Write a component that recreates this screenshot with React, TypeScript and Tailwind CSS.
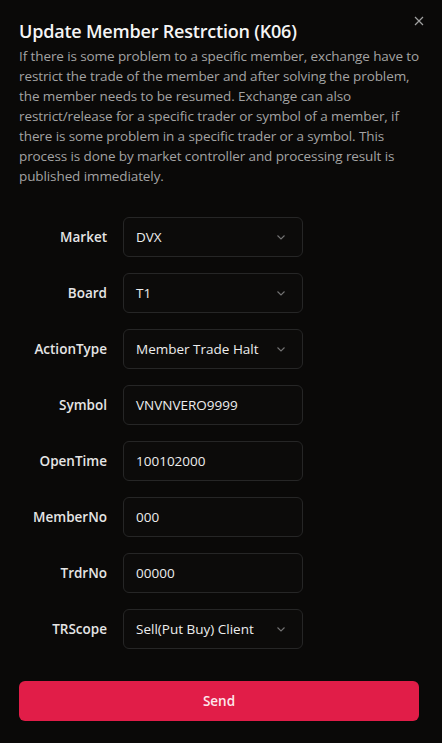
import React from "react";

const font = { fontFamily: '"Open Sans", "Noto Sans", sans-serif' };

function Chevron() {
  return (
    <svg width="10" height="10" viewBox="0 0 10 10" fill="none" className="text-neutral-500">
      <path d="M1.5 3.5 L5 7 L8.5 3.5" stroke="currentColor" strokeWidth="1.1" />
    </svg>
  );
}

const rows: { label: string; value: string; select: boolean }[] = [
  { label: "Market", value: "DVX", select: true },
  { label: "Board", value: "T1", select: true },
  { label: "ActionType", value: "Member Trade Halt", select: true },
  { label: "Symbol", value: "VNVNVERO9999", select: false },
  { label: "OpenTime", value: "100102000", select: false },
  { label: "MemberNo", value: "000", select: false },
  { label: "TrdrNo", value: "00000", select: false },
  { label: "TRScope", value: "Sell(Put Buy) Client", select: true },
];

export default function App() {
  return (
    <div className="w-[442px] h-[743px] bg-[#0a0908] relative text-white" style={font}>
      <button className="absolute right-[18px] top-[16px] text-neutral-400">
        <svg width="10" height="10" viewBox="0 0 10 10">
          <path d="M1 1 L9 9 M9 1 L1 9" stroke="currentColor" strokeWidth="1.2" />
        </svg>
      </button>
      <div className="px-[19px] pt-[18px]">
        <h2 className="text-[18px] leading-[26px] font-semibold text-[#f5f5f5] tracking-[-0.2px]">
          Update Member Restrction (K06)
        </h2>
        <p className="mt-[2px] text-[13.5px] leading-[20px] text-[#a3a3a3] tracking-[-0.1px]">
          If there is some problem to a specific member, exchange have to restrict the trade of the member and after solving the problem, the member needs to be resumed. Exchange can also restrict/release for a specific trader or symbol of a member, if there is some problem in a specific trader or a symbol. This process is done by market controller and processing result is published immediately.
        </p>
        <div className="mt-[31px] flex flex-col gap-[16px]">
          {rows.map((r) => (
            <div key={r.label} className="flex items-center gap-[16px]">
              <label className="w-[88px] text-right text-[13.5px] font-semibold text-[#e5e5e5]">
                {r.label}
              </label>
              <div className="w-[180px] h-[40px] rounded-md border border-[#262626] bg-[#0c0b0a] flex items-center justify-between pl-[12px] pr-[16px] text-[13.5px] text-[#ededed]">
                <span>{r.value}</span>
                {r.select && <Chevron />}
              </div>
            </div>
          ))}
        </div>
        <button className="mt-[32px] w-[400px] h-[40px] rounded-md bg-[#e11d48] text-[13.5px] font-semibold text-[#fde7ec]">
          Send
        </button>
      </div>
    </div>
  );
}
